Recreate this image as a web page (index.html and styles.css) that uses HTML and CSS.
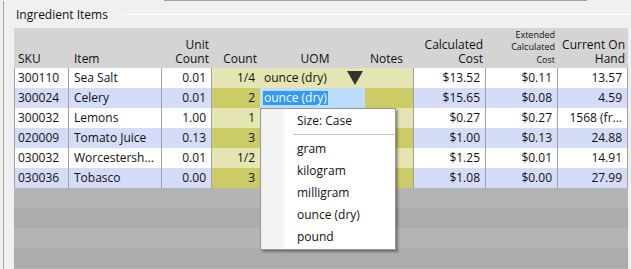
FILE: index.html
```html
<!DOCTYPE html>
<html lang="en">
<head>
  <meta charset="UTF-8">
  <title>Ingredient Items</title>
  <link rel="stylesheet" href="styles.css">
</head>
<body>
  <div class="topbar"></div>

  <section class="group">
    <div class="group-title">
      <span class="label">Ingredient Items</span>
      <span class="rule"></span>
    </div>

    <div class="grid">
      <div class="row head">
        <div class="hc">SKU</div>
        <div class="hc">Item</div>
        <div class="hc num">Unit<br>Count</div>
        <div class="hc num">Count</div>
        <div class="hc mid">UOM</div>
        <div class="hc">Notes</div>
        <div class="hc num">Calculated<br>Cost</div>
        <div class="hc num small">Extended<br>Calculated<br>Cost</div>
        <div class="hc num">Current On<br>Hand</div>
      </div>

      <div class="row">
        <div class="c first">300110</div>
        <div class="c">Sea Salt</div>
        <div class="c num">0.01</div>
        <div class="c num yel">1/4</div>
        <div class="c yel uom">ounce (dry)
          <svg class="arrow" width="16" height="14" viewBox="0 0 16 14"><polygon points="0,0 16,0 8,14" fill="#333"/></svg>
        </div>
        <div class="c yel notes"></div>
        <div class="c num">$13.52</div>
        <div class="c num">$0.11</div>
        <div class="c num">13.57</div>
      </div>

      <div class="row alt">
        <div class="c first">300024</div>
        <div class="c">Celery</div>
        <div class="c num">0.01</div>
        <div class="c num yel">2</div>
        <div class="c edit"><span class="sel">ounce (dry)</span></div>
        <div class="c yel notes"></div>
        <div class="c num">$15.65</div>
        <div class="c num">$0.08</div>
        <div class="c num">4.59</div>
      </div>

      <div class="row">
        <div class="c first">300032</div>
        <div class="c">Lemons</div>
        <div class="c num">1.00</div>
        <div class="c num yel">1</div>
        <div class="c yel uom"></div>
        <div class="c yel notes"></div>
        <div class="c num">$0.27</div>
        <div class="c num">$0.27</div>
        <div class="c num">1568 (fr...</div>
      </div>

      <div class="row alt">
        <div class="c first">020009</div>
        <div class="c">Tomato Juice</div>
        <div class="c num">0.13</div>
        <div class="c num yel">3</div>
        <div class="c yel uom"></div>
        <div class="c yel notes"></div>
        <div class="c num">$1.00</div>
        <div class="c num">$0.13</div>
        <div class="c num">24.88</div>
      </div>

      <div class="row">
        <div class="c first">030032</div>
        <div class="c">Worcestersh...</div>
        <div class="c num">0.01</div>
        <div class="c num yel">1/2</div>
        <div class="c yel uom"></div>
        <div class="c yel notes"></div>
        <div class="c num">$1.25</div>
        <div class="c num">$0.01</div>
        <div class="c num">14.91</div>
      </div>

      <div class="row alt">
        <div class="c first">030036</div>
        <div class="c">Tobasco</div>
        <div class="c num">0.00</div>
        <div class="c num yel">3</div>
        <div class="c yel uom"></div>
        <div class="c yel notes"></div>
        <div class="c num">$1.08</div>
        <div class="c num">$0.00</div>
        <div class="c num">27.99</div>
      </div>

      <div class="empty"></div>
    </div>
  </section>

  <ul class="menu">
    <li class="title">Size: Case</li>
    <li class="sep"></li>
    <li>gram</li>
    <li>kilogram</li>
    <li>milligram</li>
    <li>ounce (dry)</li>
    <li>pound</li>
  </ul>
</body>
</html>
```

FILE: styles.css
```css
body {
  margin: 0;
  width: 631px;
  height: 269px;
  overflow: hidden;
  background-color: #f0f0f0;
  font-family: "Open Sans", "Noto Sans", sans-serif;
  font-size: 12px;
  color: #111;
  position: relative;
}

.topbar {
  margin-left: 164px;
  width: 423px;
  height: 1px;
  background-color: #a0a0a0;
}

.group {
  margin-left: 3px;
  border-left: 1px solid #a0a0a0;
  height: 268px;
}

.group-title {
  display: flex;
  align-items: center;
  height: 27px;
  padding-left: 12px;
}
.group-title .label {
  line-height: 16px;
  margin-right: 15px;
}
.group-title .rule {
  flex: 1;
  height: 1px;
  background-color: #fff;
}

.grid {
  margin-left: 10px;
  width: 614px;
}

.row {
  display: grid;
  grid-template-columns: 55px 93px 50px 48px 105px 49px 72px 72px 70px;
  height: 20px;
  background-color: #fff;
}
.row.alt {
  background-color: #d5dcf7;
}

.row.head {
  height: 40px;
  background-color: #d4d4d4;
}

.hc {
  display: flex;
  flex-direction: column;
  justify-content: flex-end;
  line-height: 14px;
  padding: 0 3px 2px 5px;
  white-space: nowrap;
}
.hc:first-child { padding-left: 4px; }
.hc.num { align-items: flex-end; text-align: right; }
.hc.mid { align-items: center; padding-left: 8px; }
.hc.small {
  font-size: 9px;
  line-height: 12.5px;
}

.c {
  box-sizing: border-box;
  line-height: 20px;
  padding: 0 5px;
  border-right: 1px solid #a0a0a0;
  white-space: nowrap;
  overflow: hidden;
}
.c.first {
  border-left: 1px solid #a0a0a0;
  padding-left: 3px;
}
.c.num { text-align: right; }

.c.yel { background-color: #e5e5b3; border-right: none; }
.row.alt .c.yel { background-color: #cccc66; }
.c.notes { border-right: 1px solid #a0a0a0; }

.c.uom {
  display: flex;
  align-items: center;
  justify-content: space-between;
  padding: 0 2px 0 4px;
}
.arrow { flex: none; }

.c.edit {
  background-color: #bcdcfc;
  border-right: none;
  padding-left: 3px;
}
.sel {
  display: inline-block;
  line-height: 14px;
  padding: 0 1px;
  background-color: #3399ff;
  color: #fff;
}

.empty {
  height: 81px;
  background: repeating-linear-gradient(#b4b4b4 0 20px, #acacac 20px 40px);
}

.menu {
  position: absolute;
  left: 260px;
  top: 108px;
  width: 134px;
  margin: 0;
  padding: 1px 0;
  list-style: none;
  background: linear-gradient(to right, #f1f1f1 0, #f4f4f4 22px, #fcfcfc 24px, #fff 25px);
  border: 1px solid #979797;
  box-shadow: 2px 2px 2px rgba(0, 0, 0, 0.35);
}
.menu li {
  height: 22px;
  line-height: 22px;
  padding-left: 36px;
}
.menu li.sep {
  height: 6px;
  margin-left: 32px;
  padding: 0;
  background: linear-gradient(#fff 2px, #c5c5c5 2px 3px, #fff 3px);
}
```
